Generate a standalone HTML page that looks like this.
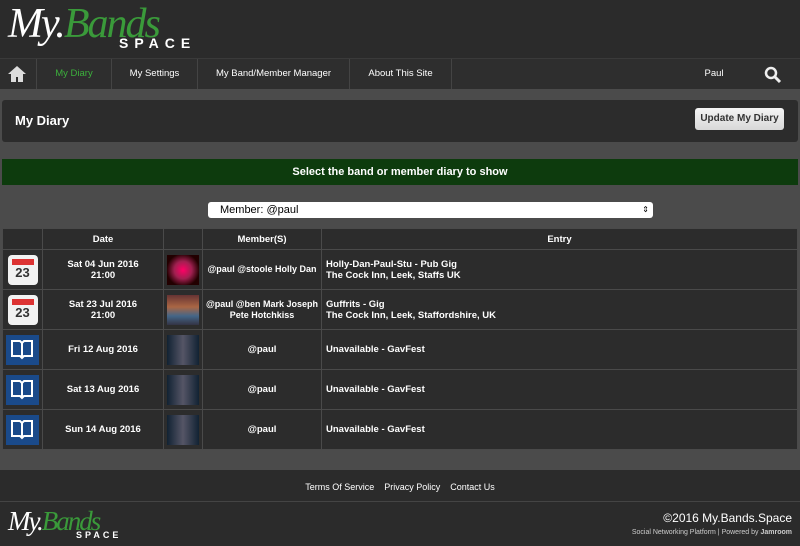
<!DOCTYPE html>
<html><head><meta charset="utf-8"><style>
*{box-sizing:border-box;margin:0;padding:0}
body{width:800px;height:546px;overflow:hidden;background:#4b4b4b;font-family:"Liberation Sans",sans-serif;color:#fff;position:relative}
.abs{position:absolute}
#hdr{left:0;top:0;width:800px;height:58px;background:#2b2b2b}
#nav{left:0;top:58px;width:800px;height:31px;background:#2e2e2e;border-top:1px solid #3a3a3a}
#nav .it{position:absolute;top:0;height:30px;line-height:30px;font-size:9.5px;text-align:center;border-left:1px solid #444;white-space:nowrap}
.logo1{font-family:"Liberation Serif",serif;font-style:italic;font-size:42px;letter-spacing:-2px}
#box{left:2px;top:100px;width:796px;height:42px;background:#2c2c2c;border-radius:3px}
#btn{left:695px;top:108px;width:89px;height:22px;background:linear-gradient(#f4f4f4,#d8d8d8);border-radius:3px;color:#333;font-size:10px;font-weight:bold;text-align:center;padding-top:5px;white-space:nowrap}
#green{left:2px;top:159px;width:796px;height:26px;background:#0d3b0d;font-size:11px;font-weight:bold;text-align:center;line-height:26px}
#sel{left:208px;top:202px;width:445px;height:16px;background:#fff;border-radius:3px;color:#000;font-size:11px;line-height:16px;padding-left:12px}
table{position:absolute;left:2px;top:228px;width:796px;border-collapse:collapse;background:#2c2c2c;font-size:9.5px;font-weight:bold;table-layout:fixed}
td,th{border:1px solid #4a4a4a;text-align:center;vertical-align:middle;white-space:nowrap}
th{height:21px}
td{height:40px;line-height:11px}
td.m{font-size:9px}
td.e{text-align:left;padding-left:4px}
.cal{width:30px;height:30px;background:#f2f2f2;border-radius:4px;margin:auto;position:relative;color:#333;font-size:13px;line-height:36px}
.cal:before{content:"";position:absolute;left:4px;top:4px;width:22px;height:6px;background:#d33}
.bk{width:33px;height:30px;background:#1a4a8a;margin:auto;position:relative}
.thumb{width:32px;height:30px;margin:auto}
#foot{left:0;top:470px;width:800px;height:31px;background:#2b2b2b;font-size:9px;text-align:center;line-height:34px}
#foot2{left:0;top:501px;width:800px;height:45px;background:#2b2b2b;border-top:1px solid #444}
</style></head><body>
<div id="hdr" class="abs">
 <div class="abs logo1" style="left:8px;top:0px;color:#fff">My.<span style="color:#3a9a3a">Bands</span></div>
 <div class="abs" style="left:119px;top:35px;font-size:14px;font-weight:bold;letter-spacing:6px">SPACE</div>
</div>
<div id="nav" class="abs">
 <svg class="abs" style="left:7px;top:6px" width="20" height="18" viewBox="0 0 20 18"><path d="M10 1L1 9h3v8h5v-5h2v5h5V9h3z" fill="#ddd"/></svg>
 <div class="it" style="left:36px;width:75px;color:#3cb03c">My Diary</div>
 <div class="it" style="left:111px;width:86px">My Settings</div>
 <div class="it" style="left:197px;width:152px">My Band/Member Manager</div>
 <div class="it" style="left:349px;width:103px;border-right:1px solid #444">About This Site</div>
 <div class="it" style="left:690px;width:48px;border:none">Paul</div>
 <svg class="abs" style="left:764px;top:7px" width="18" height="18" viewBox="0 0 18 18"><circle cx="7" cy="7" r="5" stroke="#eee" stroke-width="2.5" fill="none"/><path d="M11 11l5 5" stroke="#eee" stroke-width="3"/></svg>
</div>
<div id="box" class="abs"><div style="position:absolute;left:13px;top:13px;font-size:13px;font-weight:bold">My Diary</div></div>
<div id="btn" class="abs">Update My Diary</div>
<div id="green" class="abs">Select the band or member diary to show</div>
<div id="sel" class="abs">Member: @paul<span style="position:absolute;right:4px;top:0;font-size:8px">&#8661;</span></div>
<table>
<colgroup><col style="width:40px"><col style="width:121px"><col style="width:39px"><col style="width:119px"><col></colgroup>
<tr><th></th><th>Date</th><th></th><th>Member(S)</th><th>Entry</th></tr>
<tr><td><div class="cal">23</div></td><td>Sat 04 Jun 2016<br>21:00</td><td><div class="thumb" style="background:radial-gradient(circle,#f06 0,#a02050 40%,#200 75%)"></div></td><td class="m">@paul @stoole Holly Dan</td><td class="e">Holly-Dan-Paul-Stu - Pub Gig<br>The Cock Inn, Leek, Staffs UK</td></tr>
<tr><td><div class="cal">23</div></td><td>Sat 23 Jul 2016<br>21:00</td><td><div class="thumb" style="background:linear-gradient(#633,#a64 40%,#468 70%,#334)"></div></td><td class="m">@paul @ben Mark Joseph<br>Pete Hotchkiss</td><td class="e">Guffrits - Gig<br>The Cock Inn, Leek, Staffordshire, UK</td></tr>
<tr><td><div class="bk"></div></td><td>Fri 12 Aug 2016</td><td><div class="thumb" style="background:linear-gradient(90deg,#123,#556 50%,#123)"></div></td><td>@paul</td><td class="e">Unavailable - GavFest</td></tr>
<tr><td><div class="bk"></div></td><td>Sat 13 Aug 2016</td><td><div class="thumb" style="background:linear-gradient(90deg,#123,#556 50%,#123)"></div></td><td>@paul</td><td class="e">Unavailable - GavFest</td></tr>
<tr><td><div class="bk"></div></td><td>Sun 14 Aug 2016</td><td><div class="thumb" style="background:linear-gradient(90deg,#123,#556 50%,#123)"></div></td><td>@paul</td><td class="e">Unavailable - GavFest</td></tr>
</table>
<div id="foot" class="abs">Terms Of Service &nbsp;&nbsp; Privacy Policy &nbsp;&nbsp; Contact Us</div>
<div id="foot2" class="abs">
 <div class="abs logo1" style="left:8px;top:4px;font-size:27px;color:#fff">My.<span style="color:#3a9a3a">Bands</span></div>
 <div class="abs" style="left:76px;top:28px;font-size:9px;font-weight:bold;letter-spacing:3px">SPACE</div>
 <div class="abs" style="right:8px;top:9px;font-size:12px">©2016 My.Bands.Space</div>
 <div class="abs" style="right:8px;top:27px;font-size:7px;color:#ccc">Social Networking Platform | Powered by <b>Jamroom</b></div>
</div>
<svg class="abs" style="left:10px;top:338px" width="24" height="22" viewBox="0 0 24 22"><path d="M2 3h8l2 2 2-2h8v15h-8l-2 2-2-2H2z M12 5v15" stroke="#fff" stroke-width="2" fill="none"/></svg>
<svg class="abs" style="left:10px;top:378px" width="24" height="22" viewBox="0 0 24 22"><path d="M2 3h8l2 2 2-2h8v15h-8l-2 2-2-2H2z M12 5v15" stroke="#fff" stroke-width="2" fill="none"/></svg>
<svg class="abs" style="left:10px;top:418px" width="24" height="22" viewBox="0 0 24 22"><path d="M2 3h8l2 2 2-2h8v15h-8l-2 2-2-2H2z M12 5v15" stroke="#fff" stroke-width="2" fill="none"/></svg>
</body></html>
